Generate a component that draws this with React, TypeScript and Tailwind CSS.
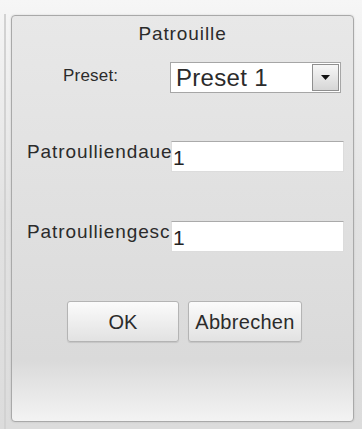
export default function App() {
  return (
    <div
      className="relative w-[362px] h-[429px] overflow-hidden bg-gradient-to-b from-[#f6f6f6] via-[#e2e2e2] to-[#dcdcdc] pl-[11px] pt-[15px]"
      style={{ fontFamily: '"Liberation Sans", Arial, sans-serif' }}
    >
      {/* outer window frame line on the left */}
      <div className="absolute left-[4px] top-[14px] bottom-0 w-[2px] bg-[#d2d2d2]" />

      {/* dialog panel */}
      <div className="relative flex flex-col w-[343px] h-[407px] rounded-[4px] border border-[#a9a9a9] bg-gradient-to-b from-[#e8e8e8] via-[#dadada] via-85% to-[#f3f3f3] shadow-[0_0_2px_rgba(0,0,0,0.15)] text-[#2b2b2b]">
        <div className="mt-[7px] h-[22px] leading-[22px] text-center text-[19px] tracking-[0.9px]">Patrouille</div>

        {/* Preset row */}
        <div className="mt-[17px] flex items-start pl-[51px]">
          <span className="mt-[4px] w-[107px] leading-[20px] text-[17px] tracking-[0.2px]">Preset:</span>
          <div className="flex w-[171px] h-[31px] border border-[#a6a6a6] bg-white">
            <div className="flex-1 pl-[5px] leading-[29px] text-[24px] tracking-[0.3px]">Preset 1</div>
            <div className="my-[1px] mr-[1px] w-[27px] flex items-center justify-center border border-[#8f8f8f] bg-gradient-to-b from-[#f7f7f7] to-[#d6d6d6]">
              <svg width="9" height="5" viewBox="0 0 9 5">
                <path d="M0 0 L9 0 L4.5 5 Z" fill="#111" />
              </svg>
            </div>
          </div>
        </div>

        {/* Patrouillendauer */}
        <div className="mt-[48px] flex items-start pl-[15px]">
          <span className="w-[144px] overflow-hidden whitespace-nowrap leading-[22px] text-[19px] tracking-[0.9px]">Patroulliendauer</span>
          <div className="w-[173px] h-[31px] border border-[#dcdcdc] border-t-[#aaaaaa] bg-white pl-[1px] pt-[2px] leading-[28px] text-[21px] text-[#222]">1</div>
        </div>

        {/* Patrouillengeschwindigkeit */}
        <div className="mt-[49px] flex items-start pl-[15px]">
          <span className="w-[144px] overflow-hidden whitespace-nowrap leading-[22px] text-[19px] tracking-[0.9px]">Patroulliengeschwindigkeit</span>
          <div className="w-[173px] h-[31px] border border-[#dcdcdc] border-t-[#aaaaaa] bg-white pl-[1px] pt-[2px] leading-[28px] text-[21px] text-[#222]">1</div>
        </div>

        {/* buttons */}
        <div className="mt-[49px] flex gap-[9px] pl-[55px]">
          <button className="w-[112px] h-[41px] rounded-[3px] border border-[#b4b4b4] bg-gradient-to-b from-[#fbfbfb] to-[#e2e2e2] text-[20px] shadow-[0_1px_1px_rgba(0,0,0,0.1)]">
            OK
          </button>
          <button className="w-[114px] h-[41px] rounded-[3px] border border-[#b4b4b4] bg-gradient-to-b from-[#fbfbfb] to-[#e2e2e2] text-[20px] tracking-[0.3px] shadow-[0_1px_1px_rgba(0,0,0,0.1)]">
            Abbrechen
          </button>
        </div>
      </div>
    </div>
  );
}
